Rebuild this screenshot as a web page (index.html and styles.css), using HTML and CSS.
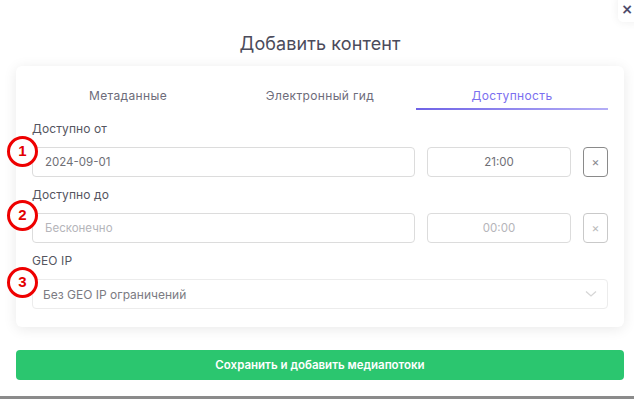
FILE: index.html
```html
<!DOCTYPE html>
<html lang="ru">
<head>
<meta charset="utf-8">
<title>Добавить контент</title>
<link rel="stylesheet" href="styles.css">
</head>
<body>
<div class="modal">
  <button class="close" type="button">×</button>
  <h1 class="title">Добавить контент</h1>
  <div class="card">
    <div class="tabs">
      <div class="tab">Метаданные</div>
      <div class="tab">Электронный гид</div>
      <div class="tab active">Доступность</div>
    </div>
    <div class="label">Доступно от</div>
    <div class="row">
      <div class="input date">2024-09-01</div>
      <div class="input time">21:00</div>
      <div class="clear">×</div>
    </div>
    <div class="label">Доступно до</div>
    <div class="row">
      <div class="input date placeholder">Бесконечно</div>
      <div class="input time placeholder">00:00</div>
      <div class="clear light">×</div>
    </div>
    <div class="label">GEO IP</div>
    <div class="select">
      <span>Без GEO IP ограничений</span>
      <svg class="chev" width="12" height="8" viewBox="0 0 12 8"><path d="M1 1.5 L6 6 L11 1.5" fill="none" stroke="#d6d6d6" stroke-width="1.3"/></svg>
    </div>
  </div>
  <button class="save" type="button">Сохранить и добавить медиапотоки</button>
  <div class="mark m1">1</div>
  <div class="mark m2">2</div>
  <div class="mark m3">3</div>
</div>
<div class="behind"></div>
</body>
</html>
```
FILE: styles.css
```css
* { box-sizing: border-box; }
html, body { margin: 0; padding: 0; }
body {
  width: 634px;
  height: 399px;
  overflow: hidden;
  background: #ffffff;
  font-family: Inter, "Noto Sans", sans-serif;
  position: relative;
}
.modal {
  height: 396px;
  background: #fff;
  padding: 32px 10px 0 16px;
  display: flex;
  flex-direction: column;
}
.close {
  position: absolute;
  top: -6px;
  right: -10px;
  width: 26px;
  height: 28px;
  border: none;
  border-radius: 5px;
  background: #fff;
  box-shadow: 0 0 10px rgba(0,0,0,0.07);
  color: #4d4b6a;
  font-size: 14px;
  font-weight: 700;
  padding: 0 11px 0 0;
  text-align: right;
  line-height: 30px;
  font-family: "DejaVu Sans", sans-serif;
}
.title {
  margin: 0;
  text-align: center;
  font-size: 18px;
  font-weight: 400;
  line-height: 24px;
  color: #4b4b5b;
  letter-spacing: 0.1px;
}
.card {
  margin-top: 10px;
  background: #fff;
  border-radius: 6px;
  box-shadow: 0 2px 14px rgba(0,0,0,0.09);
  padding: 16px 16px 18px;
}
.tabs {
  display: grid;
  grid-template-columns: 1fr 1fr 1fr;
}
.tab {
  text-align: center;
  font-size: 12px;
  letter-spacing: 0.35px;
  line-height: 16px;
  padding: 6px 0 4px;
  color: #6d6c7a;
  border-bottom: 2px solid transparent;
}
.tab.active {
  color: #7b6ff0;
  border-bottom: 2px solid;
  border-image: linear-gradient(90deg, #6e62e6, #b4aef6) 1;
}
.label {
  margin-top: 11px;
  font-size: 12px;
  letter-spacing: 0.1px;
  line-height: 16px;
  color: #55555f;
}
.row ~ .label { margin-top: 10px; }
.row {
  display: flex;
  gap: 12px;
  margin-top: 10px;
}
.input {
  height: 30px;
  border: 1px solid #dcdcdc;
  border-radius: 4px;
  font-size: 11.5px;
  line-height: 28px;
  color: #6f6f76;
}
.date { flex: 1; padding-left: 12px; }
.time { width: 144px; text-align: center; }
.placeholder { color: #b5b5ba; }
.clear {
  width: 25px;
  height: 30px;
  border: 1px solid #8a8a8a;
  border-radius: 4px;
  text-align: center;
  line-height: 27px;
  font-size: 12px;
  color: #8a8a90;
}
.clear.light { border-color: #c9c9c9; color: #bcbcbc; }
.select {
  margin-top: 10px;
  height: 30px;
  border: 1px solid #ececec;
  border-radius: 4px;
  display: flex;
  align-items: center;
  justify-content: space-between;
  padding: 0 10px 0 10px;
  font-size: 12px;
  color: #7b7b82;
}
.save {
  margin-top: 23px;
  height: 30px;
  border: none;
  border-radius: 4px;
  background: #2bc66f;
  color: #fff;
  font-family: Inter, "Noto Sans", sans-serif;
  font-size: 11.5px;
  font-weight: 600;
}
.mark {
  position: absolute;
  left: 7px;
  width: 31px;
  height: 31px;
  border: 3.5px solid #ee0000;
  border-radius: 50%;
  background: #fff;
  color: #e30000;
  font-family: "Liberation Sans", sans-serif;
  font-weight: 700;
  font-size: 15px;
  line-height: 24px;
  text-align: center;
}
.m1 { top: 136px; }
.m2 { top: 200px; }
.m3 { top: 267px; }
.behind {
  height: 3px;
  background: #8b8b8b;
}
```
